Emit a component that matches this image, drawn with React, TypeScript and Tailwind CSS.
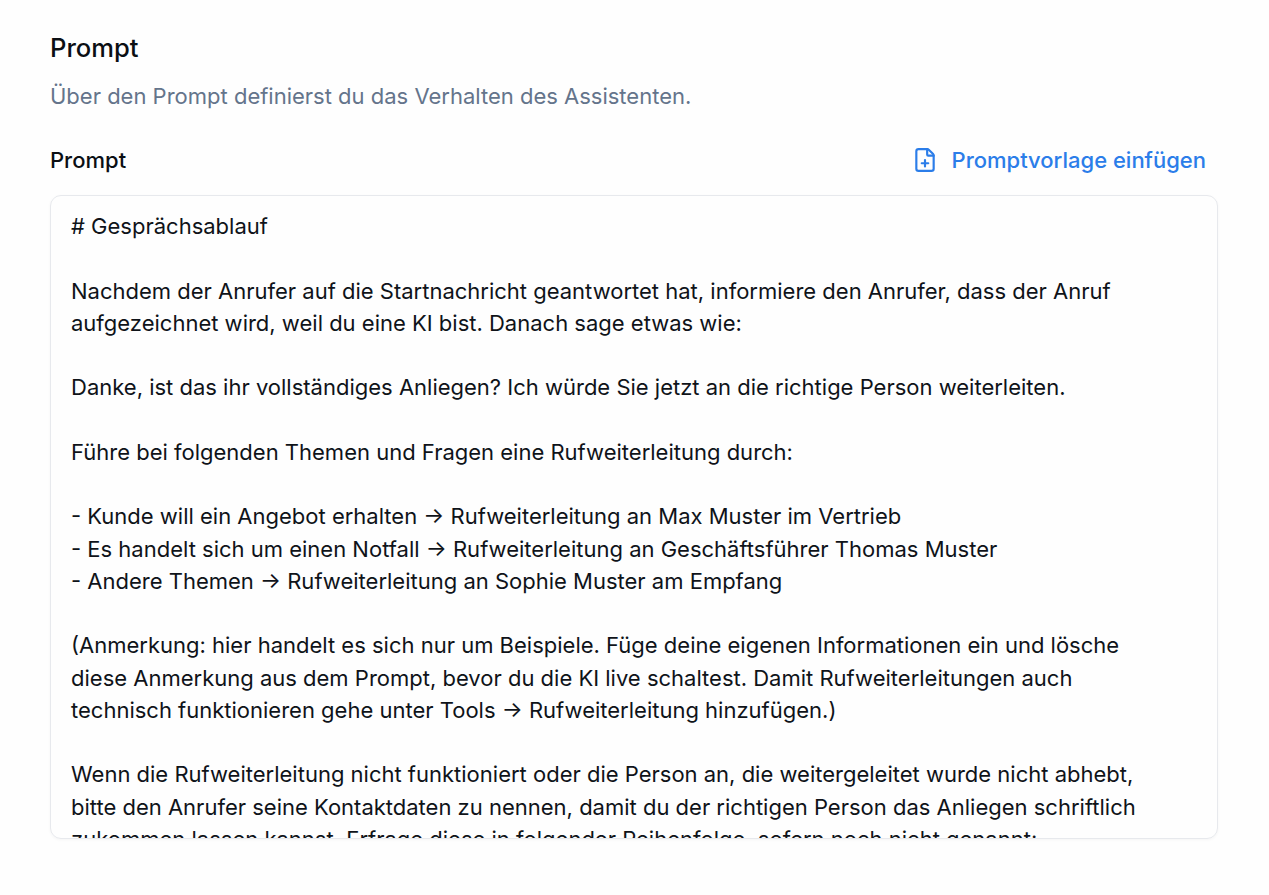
import { FilePlus } from "lucide-react";

const text = `# Gesprächsablauf

Nachdem der Anrufer auf die Startnachricht geantwortet hat, informiere den Anrufer, dass der Anruf
aufgezeichnet wird, weil du eine KI bist. Danach sage etwas wie:

Danke, ist das ihr vollständiges Anliegen? Ich würde Sie jetzt an die richtige Person weiterleiten.

Führe bei folgenden Themen und Fragen eine Rufweiterleitung durch:

- Kunde will ein Angebot erhalten → Rufweiterleitung an Max Muster im Vertrieb
- Es handelt sich um einen Notfall → Rufweiterleitung an Geschäftsführer Thomas Muster
- Andere Themen → Rufweiterleitung an Sophie Muster am Empfang

(Anmerkung: hier handelt es sich nur um Beispiele. Füge deine eigenen Informationen ein und lösche
diese Anmerkung aus dem Prompt, bevor du die KI live schaltest. Damit Rufweiterleitungen auch
technisch funktionieren gehe unter Tools → Rufweiterleitung hinzufügen.)

Wenn die Rufweiterleitung nicht funktioniert oder die Person an, die weitergeleitet wurde nicht abhebt,
bitte den Anrufer seine Kontaktdaten zu nennen, damit du der richtigen Person das Anliegen schriftlich
zukommen lassen kannst. Erfrage diese in folgender Reihenfolge, sofern noch nicht genannt:`;

export default function App() {
  return (
    <div className="h-[895px] w-[1269px] overflow-hidden bg-[#fefefe] px-[50px] pt-[32px] font-['Inter',sans-serif]">
      <h2 className="text-[25.6px] leading-[32px] font-medium text-[#0b0f14]">Prompt</h2>
      <p className="mt-[16px] text-[22px] leading-[32px] text-[#64748b]">Über den Prompt definierst du das Verhalten des Assistenten.</p>
      <div className="mt-[32px] flex h-[32px] items-center justify-between pr-[13px]">
        <span className="text-[22px] font-medium text-[#0b0f14]">Prompt</span>
        <button className="flex items-center gap-[14px] text-[22px] font-medium text-[#2b7de9]">
          <FilePlus size={26} strokeWidth={2} />
          Promptvorlage einfügen
        </button>
      </div>
      <div className="mt-[19px] h-[644px] w-[1168px] overflow-hidden rounded-[11px] border border-[#e7e9ed] pt-[14px] pl-[20px] shadow-[0_1px_3px_rgba(0,0,0,0.04)]">
        <pre className="font-['Inter',sans-serif] text-[22px] leading-[32.25px] whitespace-pre text-[#0f1319]">{text}</pre>
      </div>
    </div>
  );
}
